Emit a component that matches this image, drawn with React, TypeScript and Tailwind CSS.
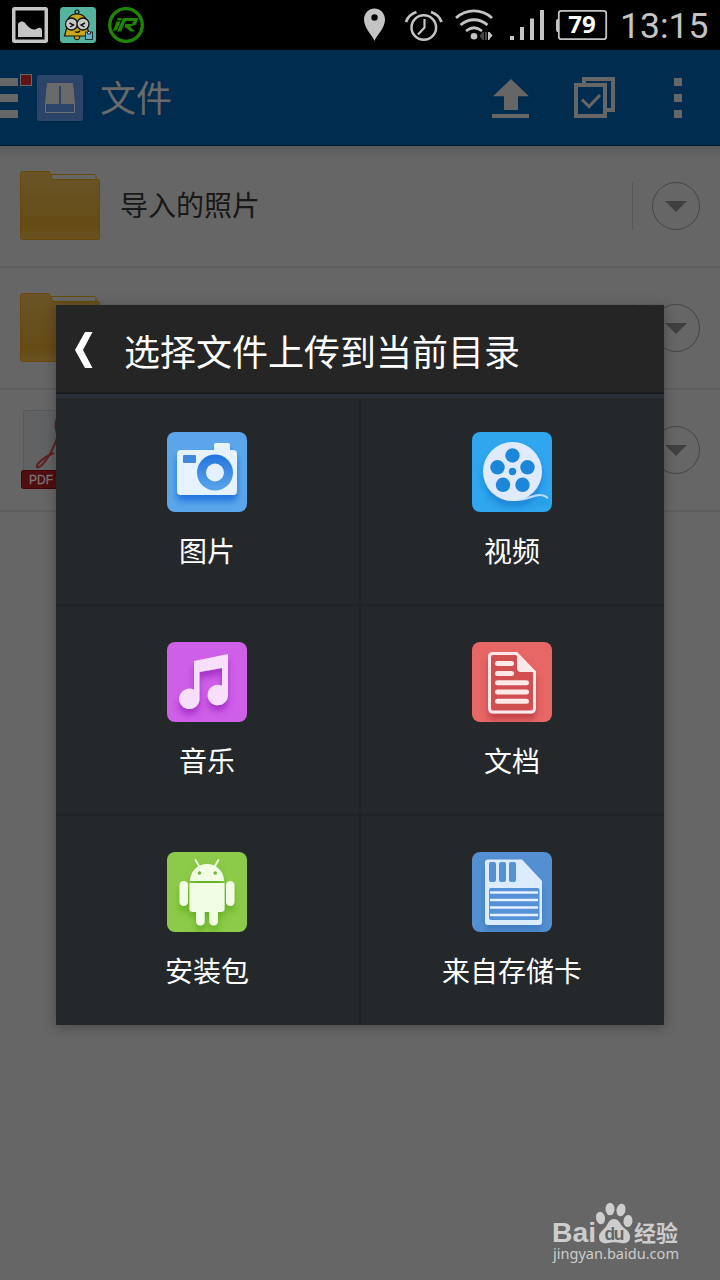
import React from 'react';

const CJK = "font-['Noto_Sans_CJK_SC',sans-serif]";

const ImageNoticeIcon = () => (
  <svg width="36" height="36" viewBox="0 0 36 36">
    <rect width="36" height="36" rx="2.500" fill="#c4c4c4" />
    <rect x="3.500" y="3.500" width="29" height="29" fill="#000" />
    <path d="M6 30V17c1.500-3 5-3.500 7.500-.5 2 2.500 4.500 5.500 8.500 6 3 .3 4-2.500 6.500-1.500 1.500.7 1.500 1.500 1.500 3v6z" fill="#c4c4c4" />
  </svg>
);

const BellFaceIcon = () => (
  <svg width="36" height="36" viewBox="0 0 36 36">
    <rect width="36" height="36" rx="3.500" fill="#56b3a0" />
    <circle cx="17" cy="5" r="2" fill="none" stroke="#111" strokeWidth="1.200" />
    <circle cx="17" cy="30" r="2.800" fill="#c9a41b" stroke="#111" />
    <path d="M4.500 29 7 20C7 11 10 7 17 7s10 4 10 13l3 9z" fill="#c9a81d" stroke="#111" strokeWidth="1.200" />
    <circle cx="11.500" cy="17" r="6" fill="#c8c8c8" stroke="#111" strokeWidth="1.300" />
    <circle cx="23" cy="17" r="6" fill="#c8c8c8" stroke="#111" strokeWidth="1.300" />
    <path d="m9.500 16 4 2-3.500 2M25 16l-4 2 3.500 2M15 24.500c2 1.500 3.500 1 5-.8" fill="none" stroke="#111" strokeWidth="1.400" />
    <rect x="25.500" y="25" width="7" height="7.500" fill="#6caed0" stroke="#111" strokeWidth=".8" />
    <path d="M27.500 25v2h3v-2" fill="#c8c8c8" stroke="#111" strokeWidth=".8" />
  </svg>
);

const RacerIcon = () => (
  <svg width="36" height="36" viewBox="0 0 36 36">
    <circle cx="18" cy="18" r="16.300" fill="none" stroke="#208404" strokeWidth="3.300" />
    <path d="M10 11h4l-1 2.500H9zM8.500 14.500h4L9 23l-4 1z" fill="#208404" />
    <path d="M15 11h15.500l-2.500 6.500-6 2 5 5h-4.500l-6-5 1-2.500h6.500l1.500-3H17.500l-4.500 10.500H9z" fill="#208404" />
  </svg>
);

const StatusBar = () => (
  <div className="flex h-[50px] items-center bg-black pl-3">
    <div className="flex gap-3">
      <ImageNoticeIcon />
      <BellFaceIcon />
      <RacerIcon />
    </div>
    <svg className="ml-[216px]" width="250" height="50" viewBox="360 0 250 50">
      {/* location */}
      <path d="M374.500 41c-2-6-10.500-12.500-10.500-21.500C364 13 369 8.500 374.500 8.500S385 13 385 19.500c0 9-8.500 15.500-10.500 21.500z" fill="#c4c4c4" />
      <circle cx="374.500" cy="17.500" r="3.200" fill="#000" />
      {/* alarm */}
      <g fill="none" stroke="#c4c4c4" strokeWidth="2.500">
        <circle cx="423.800" cy="27.500" r="12.300" />
        <path d="M424.500 19v8.500l-6.500 7" strokeWidth="2.200" />
        <path d="M406 22c1.500-4.500 4.500-8 10.500-10M441.500 22c-1.500-4.500-4.500-8-10.500-10" strokeWidth="2.800" />
      </g>
      {/* wifi */}
      <g fill="none" stroke="#c4c4c4" strokeWidth="2.800">
        <path d="M456 18c10-9.500 26-9.500 36 0" />
        <path d="M460.500 25c8-7 19-7 27 0" />
        <path d="M466 31c5-4 11-4 16 0" />
      </g>
      <circle cx="474" cy="36.300" r="3.300" fill="#c4c4c4" />
      <path d="M484 32v8h-1.500l-3-4 3-4z" fill="#444" />
      <path d="M485 32h2v8h-2z" fill="#444" />
      <path d="M488 32h1.500l3 3.500-3 3.500V40H488z" fill="#c4c4c4" />
      {/* signal */}
      <path d="M510 36h4v4h-4zM520 27h4v13h-4zM530 18.500h4V40h-4zM540 10h4v30h-4z" fill="#c4c4c4" />
      {/* battery */}
      <rect x="558.800" y="10.800" width="47.400" height="28.400" rx="2.500" fill="none" stroke="#c4c4c4" strokeWidth="1.800" />
      <path d="M558 19v13h-1q-1-1-1-3v-7q0-2 1-3z" fill="#c4c4c4" />
      <text x="582" y="33" textAnchor="middle" fill="#fff" fontFamily="Open Sans" fontWeight="700" fontSize="24">79</text>
    </svg>
    <span className="ml-[10px] pt-[3px] font-['Roboto',sans-serif] text-[35.5px] leading-[47px] font-normal text-[#c4c4c4]">13:15</span>
  </div>
);

const AppBar = () => (
  <header className="flex h-24 items-center border-b border-[#031c31] bg-[#002c4f]">
    <svg width="84" height="96" viewBox="0 50 84 96">
      <path d="M0 78h18v8H0zM0 94h18v8H0zM0 110h18v8H0z" fill="#666" />
      <rect x="20.500" y="74.500" width="11" height="11" fill="#601313" stroke="#666" />
      <rect x="37" y="76" width="46" height="46" rx="3" fill="#002442" />
      <rect x="37" y="75" width="46" height="46" rx="2.500" fill="#2b4468" />
      <path d="M47.500 83.500h25l2 20.500v8.500h-29V104z" fill="none" stroke="#6b6f76" />
      <path d="M47.500 83h25l2 21h-29z" fill="#6a6a6b" />
      <path d="M59 86h2v18h-2z" fill="#2b4468" />
    </svg>
    <h1 className={`${CJK} ml-4 pb-[3px] text-[36px] leading-[90px] text-[#696969]`}>文件</h1>
    <svg className="ml-auto" width="230" height="96" viewBox="490 50 230 96">
      <g fill="#666">
        <path d="m511 79 18 17.300h-11V110h-14V96.300h-11zM492 114h37v4h-37z" />
        <path d="M674 78h8v8h-8zM674 94h8v8h-8zM674 110h8v8h-8z" />
      </g>
      <g fill="none" stroke="#666" strokeWidth="4">
        <path d="M576 85h29v31h-29z" />
        <path d="M584 83v-4h29v31h-6" />
        <path d="m582 99.500 7 7 11-11.500" strokeWidth="3" />
      </g>
    </svg>
  </header>
);

const FolderIcon = () => (
  <svg width="80" height="80" viewBox="0 0 80 80">
    <defs>
      <linearGradient id="folder" x1="0" y1="0" x2="0" y2="1">
        <stop offset="0" stopColor="#6a5427" />
        <stop offset=".8" stopColor="#654c15" />
        <stop offset="1" stopColor="#6a5321" />
      </linearGradient>
    </defs>
    <path d="M29 8.500h45.500q1.500 0 1.500 1.500v5H30z" fill="#696763" stroke="#674a09" />
    <path d="M.5 7.500q0-2 2-2H28q2 0 2.500 2l2 6H78q1.500 0 1.500 1.500v57q0 1.500-1.500 1.500H2.500q-2 0-2-2z" fill="url(#folder)" stroke="#674a09" />
  </svg>
);

const PdfIcon = () => (
  <svg width="80" height="80" viewBox="0 0 80 80">
    <rect x="3.500" y=".5" width="73" height="76" rx="1.500" fill="#606264" stroke="#5a5a5a" />
    <path d="M37 9c-3 4-1 14 3 23 4 9 14 19 23 20M37 9c5 4 1 20-6 33-5 10-12 17-14 15s8-11 17-14" fill="none" stroke="#621e20" strokeWidth="2" />
    <rect x="1.500" y="60.500" width="77" height="18" rx="2" fill="#500e10" stroke="#3f0708" />
    <text x="9" y="73.500" fill="#777" stroke="#777" strokeWidth=".3" fontFamily="Liberation Sans" fontSize="12">PDF</text>
  </svg>
);

const FileRow = ({ icon, name }: { icon: React.ReactNode; name?: string }) => (
  <li className="flex h-[122px] items-center border-b-2 border-[#5f5f5f] px-5">
    {icon}
    <span className={`${CJK} ml-5 pb-[5px] text-[28px] leading-10 text-[#181818]`}>{name}</span>
    <i className="ml-auto h-12 w-px bg-[#585858]" />
    <span className="ml-[19px] flex size-12 items-center justify-center rounded-full border border-[#464646]">
      <svg width="22" height="12" viewBox="0 0 22 12">
        <path d="M0 1h22L11 12z" fill="#404040" />
      </svg>
    </span>
  </li>
);

const Tile = ({ id, color, shadow, children }: { id: string; color: string; shadow: string; children: React.ReactNode }) => (
  <svg width="80" height="80" viewBox="0 0 80 80">
    <defs>
      <filter id={id} x="-20%" y="-20%" width="140%" height="150%">
        <feDropShadow dx="0" dy="6" stdDeviation="3" floodColor={shadow} floodOpacity=".85" />
      </filter>
      <linearGradient id={`${id}-lens`} x1="0" y1="0" x2="0" y2="1">
        <stop offset="0" stopColor="#2474dd" />
        <stop offset="1" stopColor="#5aa5eb" />
      </linearGradient>
    </defs>
    <rect width="80" height="80" rx="8" fill={color} />
    <g filter={`url(#${id})`}>{children}</g>
  </svg>
);

const PhotoTile = () => (
  <Tile id="photo" color="#5ba6ea" shadow="#176dde">
    <path d="M14 18h33v-5q0-2 2-2h12q2 0 2 2v5h3q4 0 4 4v37q0 4-4 4H14q-4 0-4-4V22q0-4 4-4z" fill="#e5f2ff" />
    <rect x="16" y="23" width="13" height="8" rx="1" fill="#3f89df" />
    <circle cx="48" cy="40.500" r="18" fill="url(#photo-lens)" />
    <circle cx="48" cy="40.500" r="9" fill="#e5f1ff" />
  </Tile>
);

const VideoTile = () => (
  <Tile id="video" color="#2fa6ee" shadow="#1581d3">
    <path d="M42 68c14 1 19-6 27-5q3 0 7 3" fill="none" stroke="#b9def9" strokeWidth="2" />
    <circle cx="40.500" cy="39.500" r="29.500" fill="#dfebfd" />
    <g fill="#1f86d9">
      <circle cx="40.500" cy="23.500" r="7.200" />
      <circle cx="25.500" cy="35.300" r="7.200" />
      <circle cx="55.500" cy="35.300" r="7.200" />
      <circle cx="31" cy="52.800" r="7.200" />
      <circle cx="50.500" cy="52.800" r="7.200" />
      <circle cx="40.500" cy="39.500" r="3.700" />
    </g>
  </Tile>
);

const MusicTile = () => (
  <Tile id="music" color="#ce5fe7" shadow="#a02bc5">
    <path d="M27 19 61 12v41a10.200 10.200 0 1 1-6-9.200V26l-22.500 4v27a10.200 10.200 0 1 1-5.500-9.200z" fill="#f7dffc" />
  </Tile>
);

const DocumentTile = () => (
  <Tile id="document" color="#e76666" shadow="#bd3d43">
    <path d="M21 11.500h23.500L62.500 30v36q0 4-4 4H21q-3.500 0-3.500-4V15q0-3.500 3.500-3.500z" fill="#d24f51" stroke="#fbe9e9" strokeWidth="3" />
    <path d="M45 10.500 64 30H49q-4 0-4-4z" fill="#fbe9e9" />
    <path d="M25.500 21.500h14M25.500 31.500h14M25.500 40.700h29M25.500 50h29M25.500 59.200h29" stroke="#fbe9e9" strokeWidth="5" strokeLinecap="round" />
  </Tile>
);

const PackageTile = () => (
  <Tile id="package" color="#8cca49" shadow="#62ae1e">
    <g fill="#f1fde5">
      <path d="M23 29a17 17 0 0 1 34 0z" />
      <path d="M22.500 31h35v25.500q0 3.500-3.500 3.500H26q-3.500 0-3.500-3.500z" />
      <rect x="12.500" y="29" width="8.500" height="25" rx="4.250" />
      <rect x="59" y="29" width="8.500" height="25" rx="4.250" />
      <rect x="29" y="52" width="8.700" height="21.500" rx="4.350" />
      <rect x="42.300" y="52" width="8.700" height="21.500" rx="4.350" />
    </g>
    <path d="m28.500 8 3.500 6M51.500 8 48 14" stroke="#f1fde5" strokeWidth="1.800" strokeLinecap="round" />
    <circle cx="32.500" cy="21" r="1.800" fill="#76b43e" />
    <circle cx="48.200" cy="21" r="1.800" fill="#76b43e" />
  </Tile>
);

const StorageTile = () => (
  <Tile id="storage" color="#548fd1" shadow="#3c78c0">
    <path d="M16 7.500h34L70 29v41q0 3-3 3H16q-3 0-3-3V10.500q0-3 3-3z" fill="#dcecff" />
    <g fill="#5591d4">
      <rect x="17" y="10" width="7" height="20" rx="2" />
      <rect x="27" y="10" width="7" height="20" rx="2" />
      <rect x="37" y="10" width="7" height="20" rx="2" />
      <rect x="17" y="36" width="50.500" height="32" rx="2" />
    </g>
    <path d="M18 40.500h48M18 48h48M18 55.500h48M18 63h48" stroke="#e3f0ff" strokeWidth="2.600" />
  </Tile>
);

const SOURCES = [
  { label: '图片', icon: PhotoTile },
  { label: '视频', icon: VideoTile },
  { label: '音乐', icon: MusicTile },
  { label: '文档', icon: DocumentTile },
  { label: '安装包', icon: PackageTile },
  { label: '来自存储卡', icon: StorageTile },
];

const UploadDialog = () => (
  <section className="absolute top-[305px] left-14 h-[720px] w-[608px] bg-[#24282b] shadow-[0_2px_12px_rgba(0,0,0,0.3)]">
    <div className="flex h-[89px] items-center border-b-2 border-[#1a1b1e] bg-[#252525] pt-[2px] pl-[18px]">
      <svg width="20" height="38" viewBox="0 0 20 38">
        <path d="M11 1h7.500L9 19l9.500 18H11L1 19z" fill="#fff" />
      </svg>
      <h2 className={`${CJK} ml-[30px] text-[36px] leading-[80px] text-white`}>选择文件上传到当前目录</h2>
    </div>
    <div className="h-1 bg-[#282e36]" />
    <div className="grid grid-cols-2">
      {SOURCES.map(({ label, icon: Icon }, i) => (
        <div
          key={label}
          className={`flex flex-col items-center border-[#202427] pr-px ${i % 2 === 0 ? 'border-r' : 'border-l'} ${i < 2 ? 'h-[206px] pt-[34px]' : 'h-[210px] border-t-2 pt-9'}`}
        >
          <Icon />
          <span className={`${CJK} mt-[18px] text-[28px] leading-10 text-white`}>{label}</span>
        </div>
      ))}
    </div>
  </section>
);

const Watermark = () => (
  <svg className="absolute top-[1200px] left-[548px]" width="136" height="68" viewBox="548 1200 136 68">
    <g fill="#cdcdcd">
      <text x="552" y="1242" fontFamily="Liberation Sans" fontWeight="700" fontSize="28.500" textLength="44" lengthAdjust="spacingAndGlyphs">Bai</text>
      <ellipse cx="600.500" cy="1218" rx="4.500" ry="6.200" transform="rotate(-12 600.500 1218)" />
      <ellipse cx="610" cy="1209" rx="4.500" ry="6.300" />
      <ellipse cx="621" cy="1210" rx="4.500" ry="6.300" transform="rotate(12 621 1210)" />
      <ellipse cx="628" cy="1221" rx="4.500" ry="6" transform="rotate(8 628 1221)" />
      <path d="M614 1219c5 0 6 5 10 9 4 3 6 5 6 9 0 5-4 7-9 6-5-1-9-1-13 0-5 1-9-1-9-6 0-4 3-6 6-9 3-4 4-9 9-9z" />
      <text x="634" y="1240.500" fontFamily="Noto Sans CJK SC" fontWeight="700" fontSize="22">经验</text>
      <text x="553" y="1259" fontFamily="Noto Sans" fontSize="15" textLength="126" lengthAdjust="spacingAndGlyphs">jingyan.baidu.com</text>
    </g>
    <text x="604.500" y="1240" fill="#666" fontFamily="Liberation Sans" fontWeight="700" fontSize="17.500" textLength="20">du</text>
  </svg>
);

export default function App() {
  return (
    <div className="relative h-[1280px] w-[720px] overflow-hidden bg-[#666]">
      <StatusBar />
      <AppBar />
      <ul className="bg-[linear-gradient(#5b5b5b,#666_12px)]">
        <FileRow icon={<FolderIcon />} name="导入的照片" />
        <FileRow icon={<FolderIcon />} />
        <FileRow icon={<PdfIcon />} />
      </ul>
      <UploadDialog />
      <Watermark />
    </div>
  );
}
